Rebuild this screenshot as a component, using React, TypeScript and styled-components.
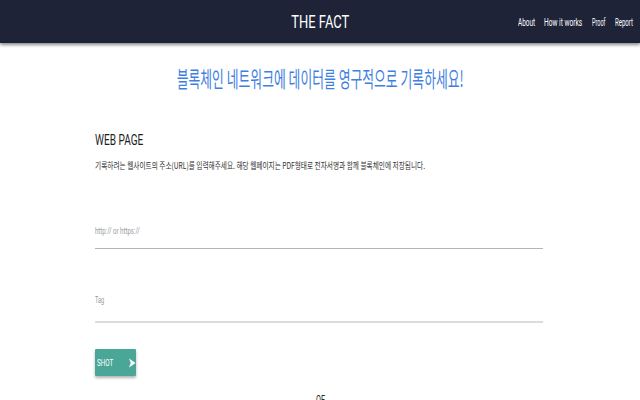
import React from "react";
import styled, { createGlobalStyle } from "styled-components";

const Global = createGlobalStyle`
  html, body { margin: 0; padding: 0; background: #ffffff; }
  body { font-family: Roboto, "Noto Sans CJK KR", sans-serif; overflow: hidden; }
`;

const Page = styled.div`
  width: 640px;
  height: 400px;
  overflow: hidden;
  display: flex;
  flex-direction: column;
`;

const Header = styled.header`
  height: 43px;
  flex: none;
  background: #1e2337;
  box-shadow: 0 2px 3px rgba(0, 0, 0, 0.45);
  display: grid;
  grid-template-columns: 1fr auto 1fr;
  align-items: center;
  position: relative;
  z-index: 1;
`;

const Squeeze = styled.span<{ $sx: number; $origin?: string }>`
  display: inline-block;
  white-space: nowrap;
  transform: scaleX(${(p) => p.$sx});
  transform-origin: ${(p) => p.$origin ?? "left"} center;
`;

const Brand = styled.div`
  grid-column: 2;
  width: 60px;
  display: flex;
  justify-content: center;
  color: #ffffff;
  font-family: Roboto, sans-serif;
  font-size: 18px;
  line-height: 18px;
  margin-top: 1px;
`;

const Nav = styled.nav`
  grid-column: 3;
  justify-self: end;
  display: flex;
  gap: 10px;
  padding-right: 7px;
  margin-top: 2px;
`;

const NavItem = styled.a<{ $w: number }>`
  width: ${(p) => p.$w}px;
  color: #ffffff;
  font-family: Roboto, sans-serif;
  font-size: 11px;
  line-height: 12px;
  text-decoration: none;
`;

const Headline = styled.h1`
  margin: 23px 0 0;
  display: flex;
  justify-content: center;
  font-family: "Noto Sans CJK KR", sans-serif;
  font-weight: 400;
  font-size: 22px;
  line-height: 22px;
  color: #3f7fe2;
`;

const Form = styled.section`
  width: 448px;
  margin: 45px 0 0 95px;
  display: flex;
  flex-direction: column;
`;

const SectionTitle = styled.h2`
  margin: 0;
  font-family: Roboto, sans-serif;
  font-weight: 400;
  font-size: 14px;
  line-height: 14px;
  color: #1c1c1c;
`;

const Description = styled.p`
  margin: 14px 0 0;
  font-family: "Noto Sans CJK KR", sans-serif;
  font-size: 9px;
  line-height: 9px;
  color: #333333;
`;

const Field = styled.div<{ $top: number; $pad: number; $line: string; $thick: number }>`
  margin-top: ${(p) => p.$top}px;
  padding-bottom: ${(p) => p.$pad}px;
  border-bottom: ${(p) => p.$thick}px solid ${(p) => p.$line};
  font-family: Roboto, sans-serif;
  font-size: 9px;
  line-height: 10px;
  color: #9a9a9a;
`;

const ShotButton = styled.button`
  margin-top: 26px;
  width: 41px;
  height: 27px;
  border: none;
  border-radius: 1px;
  background: #4aa798;
  box-shadow: 0 2px 3px rgba(0, 0, 0, 0.3);
  color: #ffffff;
  display: flex;
  align-items: center;
  justify-content: center;
  gap: 7px;
  padding: 0 0 0 2px;
  font-family: Roboto, sans-serif;
  font-size: 9px;
  font-weight: 400;
`;

const Footer = styled.div`
  margin-top: 18px;
  display: flex;
  justify-content: center;
  font-family: Roboto, sans-serif;
  font-size: 12px;
  line-height: 12px;
  color: #222;
`;

export default function App() {
  return (
    <>
      <Global />
      <Page>
        <Header>
          <Brand>
            <Squeeze $sx={0.72} $origin="center">THE FACT</Squeeze>
          </Brand>
          <Nav>
            <NavItem $w={16}><Squeeze $sx={0.58}>About</Squeeze></NavItem>
            <NavItem $w={38}><Squeeze $sx={0.6}>How it works</Squeeze></NavItem>
            <NavItem $w={13}><Squeeze $sx={0.5}>Proof</Squeeze></NavItem>
            <NavItem $w={18}><Squeeze $sx={0.55}>Report</Squeeze></NavItem>
          </Nav>
        </Header>
        <Headline>
          <Squeeze $sx={0.583} $origin="center">블록체인 네트워크에 데이터를 영구적으로 기록하세요!</Squeeze>
        </Headline>
        <Form>
          <SectionTitle>
            <Squeeze $sx={0.72}>WEB PAGE</Squeeze>
          </SectionTitle>
          <Description>
            <Squeeze $sx={0.74}>
              기록하려는 웹사이트의 주소(URL)를 입력해주세요. 해당 웹페이지는 PDF형태로 전자서명과 함께 블록체인에 저장됩니다.
            </Squeeze>
          </Description>
          <Field $top={56} $pad={12} $line="#b5b5b5" $thick={1}>
            <Squeeze $sx={0.675}>http:// or https://</Squeeze>
          </Field>
          <Field $top={46} $pad={16} $line="#dcdcdc" $thick={2}>
            <Squeeze $sx={0.62}>Tag</Squeeze>
          </Field>
          <ShotButton>
            <Squeeze $sx={0.7}>SHOT</Squeeze>
            <svg width="8" height="10" viewBox="0 0 8 10">
              <path d="M1 0.5 L7.5 5 L1 9.5 L2.8 5 Z" fill="#ffffff" />
            </svg>
          </ShotButton>
        </Form>
        <Footer>
          <Squeeze $sx={0.6} $origin="center">OF</Squeeze>
        </Footer>
      </Page>
    </>
  );
}
